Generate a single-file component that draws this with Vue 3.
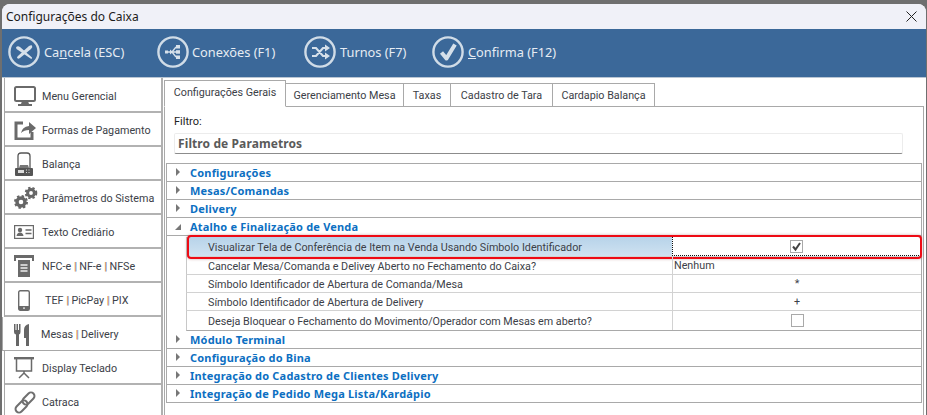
<script setup>
const menu = [
  { key: 'monitor', label: ['Menu Gerencial'] },
  { key: 'share', label: ['Formas de Pagamento'] },
  { key: 'scale', label: ['Balança'] },
  { key: 'gears', label: ['Parâmetros do Sistema'] },
  { key: 'card', label: ['Texto Crediário'] },
  { key: 'printer', label: ['NFC-e ', ' NF-e ', ' NFSe'] },
  { key: 'phone', label: ['TEF ', ' PicPay ', ' PIX'] },
  { key: 'food', label: ['Mesas ', ' Delivery'], active: true },
  { key: 'screen', label: ['Display Teclado'] },
  { key: 'link', label: ['Catraca'] }
]
const tabs = ['Gerenciamento Mesa', 'Taxas', 'Cadastro de Tara', 'Cardapio Balança']
const before = ['Configurações', 'Mesas/Comandas', 'Delivery']
const after = ['Módulo Terminal', 'Configuração do Bina', 'Integração do Cadastro de Clientes Delivery', 'Integração de Pedido Mega Lista/Kardápio']
</script>

<template>
  <div class="screen">
    <div class="window">
      <header class="titlebar">
        <span>Configurações do Caixa</span>
        <svg class="close" width="11" height="11" viewBox="0 0 11 11"><path d="M.5.5l10 10M10.500.5l-10 10" stroke="#222" stroke-width="1" fill="none"/></svg>
      </header>

      <nav class="toolbar">
        <div class="tool tool-cancel">
          <svg width="32" height="32" viewBox="0 0 32 32"><circle cx="16" cy="16" r="14.6" class="ring"/><path d="M8 11.5Q9.5 9.5 12 11L24 21.5Q24.5 23.500 22.500 22.500L10 14Q8 13 8 11.5Z" fill="#d6e0ea"/><path d="M24 9.500Q25 11 23 13L12 22Q9.500 23.500 9 21.500Q9 20.500 11 19L21 10Q23 8.800 24 9.500Z" fill="#d6e0ea"/></svg>
          <span>Ca<u>n</u>cela (ESC)</span>
        </div>
        <div class="tool tool-conn">
          <svg width="32" height="32" viewBox="0 0 32 32"><circle cx="16" cy="16" r="14.6" class="ring"/><rect x="8" y="14.5" width="3" height="3" fill="#d6e0ea"/><path d="M11 16h4M15 16l4-5M15 16l4 5M15 16h4" stroke="#d6e0ea" stroke-width="1.3" fill="none"/><path d="M13 13.5l3 2.5-3 2.500z" fill="#d6e0ea"/><rect x="19" y="9" width="4" height="3.5" fill="#d6e0ea"/><rect x="19" y="14.2" width="4" height="3.5" fill="#d6e0ea"/><rect x="19" y="19.5" width="4" height="3.5" fill="#d6e0ea"/></svg>
          <span>Conexões (F1)</span>
        </div>
        <div class="tool tool-shift">
          <svg width="32" height="32" viewBox="0 0 32 32"><circle cx="16" cy="16" r="14.6" class="ring"/><path d="M8 12h4l7 8h3M8 20h4l7-8h3" stroke="#d6e0ea" stroke-width="2.200" fill="none"/><path d="M21 8.500l5 3.500-5 3.500zM21 16.500l5 3.500-5 3.500z" fill="#d6e0ea"/></svg>
          <span>Turnos (F7)</span>
        </div>
        <div class="tool tool-ok">
          <svg width="32" height="32" viewBox="0 0 32 32"><circle cx="16" cy="16" r="14.6" class="ring"/><path d="M9.500 16.500l5 6 8.500-14" stroke="#d6e0ea" stroke-width="4" fill="none" stroke-linejoin="round"/></svg>
          <span><u>C</u>onfirma (F12)</span>
        </div>
      </nav>

      <div class="body">
        <aside class="sidebar">
          <div v-for="item in menu" :key="item.key" class="side-item" :class="['side-' + item.key, { active: item.active }]">
            <span class="side-icon">
              <svg v-if="item.key === 'monitor'" width="22" height="20" viewBox="0 0 22 20"><rect x="1" y="1" width="20" height="14" rx="1.500" fill="none" stroke="#6a6a6a" stroke-width="2"/><path d="M8 15h6l1 3H7zM4 18h14v2H4z" fill="#6a6a6a"/></svg>
              <svg v-else-if="item.key === 'share'" width="22" height="20" viewBox="0 0 22 20"><path d="M9 3H2v16h16v-7" fill="none" stroke="#6a6a6a" stroke-width="3"/><path d="M7 13q1-6 8-7V2l7 6-7 6v-4q-5 0-8 3z" fill="#6a6a6a"/></svg>
              <svg v-else-if="item.key === 'scale'" width="20" height="25" viewBox="0 0 20 25"><path d="M4 16V4q0-3 3-3h6q3 0 3 3v12" fill="none" stroke="#555" stroke-width="1.300"/><path d="M6 13h8l1 3H5z" fill="#777"/><rect x="1" y="16" width="18" height="8" rx="1" fill="#555"/><rect x="4" y="18" width="6" height="3" fill="#ddd"/><path d="M12 18h1M14.500 18h1M12 20.500h1M14.500 20.500h1" stroke="#ddd"/></svg>
              <svg v-else-if="item.key === 'gears'" width="24" height="24" viewBox="0 0 24 24"><circle cx="7" cy="16" r="4" fill="none" stroke="#666" stroke-width="3.400"/><circle cx="7" cy="16" r="6" fill="none" stroke="#666" stroke-width="2" stroke-dasharray="2.400 2.300"/><circle cx="17" cy="7" r="3.400" fill="none" stroke="#666" stroke-width="3"/><circle cx="17" cy="7" r="5.300" fill="none" stroke="#666" stroke-width="2" stroke-dasharray="2.300 2"/></svg>
              <svg v-else-if="item.key === 'card'" width="20" height="14" viewBox="0 0 20 14"><rect x=".6" y=".6" width="18.800" height="12.800" fill="none" stroke="#6a6a6a" stroke-width="1.200"/><circle cx="6" cy="5" r="2.200" fill="#6a6a6a"/><path d="M2.500 11q.5-3.500 3.500-3.500t3.500 3.500z" fill="#6a6a6a"/><path d="M11.500 5h6M11.500 8.500h6" stroke="#6a6a6a" stroke-width="1.300"/></svg>
              <svg v-else-if="item.key === 'printer'" width="20" height="22" viewBox="0 0 20 22"><path d="M0 0h20v6h-2V3H2v3H0z" fill="#6a6a6a"/><rect x="4" y="5" width="12" height="17" fill="#6a6a6a"/><path d="M6.500 10h7M6.500 13h7M6.500 16h7" stroke="#eee" stroke-width="1.300"/></svg>
              <svg v-else-if="item.key === 'phone'" width="12" height="21" viewBox="0 0 12 21"><rect x=".7" y=".7" width="10.600" height="19.600" rx="1.500" fill="none" stroke="#6a6a6a" stroke-width="1.400"/><rect x="1" y="16" width="10" height="4" fill="#6a6a6a"/><rect x="5" y="17.500" width="2" height="1.200" fill="#eee"/></svg>
              <svg v-else-if="item.key === 'food'" width="16" height="22" viewBox="0 0 16 22"><path d="M0 0h1.500v6h1V0h1.500v6h1V0H6.500v8q0 2-1.500 2.500V22H2V10.500Q0 10 0 8z" fill="#666"/><path d="M15 0v22h-3v-8h-2V6q0-5 5-6z" fill="#666"/></svg>
              <svg v-else-if="item.key === 'screen'" width="20" height="22" viewBox="0 0 20 22"><path d="M0 1.200h20" stroke="#6a6a6a" stroke-width="2.400"/><path d="M2.500 2v12h15V2" fill="none" stroke="#6a6a6a" stroke-width="1.500"/><path d="M10 14v3M10 16l-5 5M10 16l5 5" stroke="#6a6a6a" stroke-width="1.500" fill="none"/></svg>
              <svg v-else width="22" height="23" viewBox="0 0 22 23"><g fill="none" stroke="#6f6f6f" stroke-width="2"><rect x="-7" y="-3.500" width="14" height="7" rx="3.500" transform="translate(7.500 15.500) rotate(-45)"/><rect x="-7" y="-3.500" width="14" height="7" rx="3.500" transform="translate(14.500 7.500) rotate(-45)"/></g></svg>
            </span>
            <span class="side-label">
              <template v-for="(part, i) in item.label" :key="i"><b v-if="i" class="pipe">|</b>{{ part }}</template>
            </span>
          </div>
        </aside>

        <main class="main">
          <div class="tabs">
            <div class="tab tab-active">Configurações Gerais</div>
            <div v-for="t in tabs" :key="t" class="tab">{{ t }}</div>
          </div>
          <section class="page">
            <label class="filter-label">Filtro:</label>
            <div class="filter-input">Filtro de Parametros</div>

            <div class="grid">
              <div v-for="c in before" :key="c" class="cat"><i class="caret"></i><span>{{ c }}</span></div>
              <div class="cat"><i class="caret-open"></i><span>Atalho e Finalização de Venda</span></div>

              <div class="child child-selected">
                <div class="child-label">Visualizar Tela de Conferência de Item na Venda Usando Símbolo Identificador</div>
                <div class="child-value value-focus"><span class="check checked">
                  <svg width="11" height="11" viewBox="0 0 11 11"><path d="M2 5.500l2.500 3 4.500-6.500" fill="none" stroke="#444" stroke-width="2"/></svg>
                </span></div>
                <div class="red-mark"></div>
              </div>
              <div class="child child-18">
                <div class="child-label">Cancelar Mesa/Comanda e Delivey Aberto no Fechamento do Caixa?</div>
                <div class="child-value value-left">Nenhum</div>
              </div>
              <div class="child child-18">
                <div class="child-label">Símbolo Identificador de Abertura de Comanda/Mesa</div>
                <div class="child-value">*</div>
              </div>
              <div class="child child-18">
                <div class="child-label">Símbolo Identificador de Abertura de Delivery</div>
                <div class="child-value">+</div>
              </div>
              <div class="child child-last">
                <div class="child-label">Deseja Bloquear o Fechamento do Movimento/Operador com Mesas em aberto?</div>
                <div class="child-value"><span class="check"></span></div>
              </div>

              <div v-for="c in after" :key="c" class="cat"><i class="caret"></i><span>{{ c }}</span></div>
            </div>
          </section>
        </main>
      </div>
    </div>
  </div>
</template>

<style scoped>
.screen {
  width: 927px;
  height: 415px;
  box-sizing: border-box;
  padding: 4px 1px 0 2px;
  background: #6f6f6f;
  overflow: hidden;
  font-family: "Roboto", "Noto Sans", sans-serif;
  color: #333;
}
.window {
  height: 411px;
  background: #fff;
  border-radius: 8px 8px 0 0;
  overflow: hidden;
  display: flex;
  flex-direction: column;
}
.titlebar {
  flex: none;
  height: 25px;
  background: #f0f1f8;
  display: flex;
  align-items: center;
  justify-content: space-between;
  padding: 0 9px 0 4px;
  font-family: "Noto Sans", sans-serif;
  font-size: 12px;
  color: #1c1c1c;
}
.toolbar {
  flex: none;
  height: 49px;
  box-sizing: border-box;
  background: #3b6899;
  border-bottom: 1px solid #b9c6d4;
  display: flex;
  align-items: center;
  padding: 0 0 2px 6px;
  color: #e6ecf3;
  font-family: "Noto Sans", sans-serif;
  font-size: 12.800px;
}
.tool { display: flex; align-items: center; gap: 4px; white-space: nowrap; }
.tool-cancel { width: 149px; }
.tool-conn { width: 147px; gap: 3px; }
.tool-shift { width: 128px; }
.ring { fill: none; stroke: #d0dce7; stroke-width: 2.400px; }
.body { flex: 1; display: flex; min-height: 0; }
.sidebar {
  flex: none;
  width: 159px;
  margin-left: 2px;
  padding-top: 1px;
  box-sizing: border-box;
  border-left: 1px solid #a8a8a8;
  border-right: 2px solid #b0b0b0;
  display: flex;
  flex-direction: column;
}
.side-item {
  flex: none;
  height: 34px;
  box-sizing: border-box;
  border-bottom: 2px solid #b2b2b2;
  display: flex;
  align-items: center;
  padding: 2px 0 0 9px;
  font-size: 10.750px;
  color: #3c4148;
  background: #fff;
}
.side-item.active {
  margin-left: -3px;
  padding-left: 11px;
  border-bottom: 1px solid #a8a8a8;
  border-left: 1px solid #a8a8a8;
}
.side-icon { width: 28px; flex: none; display: flex; align-items: center; height: 26px; }
.side-phone .side-icon { width: 31px; padding-left: 4px; box-sizing: border-box; }
.side-food .side-icon { width: 27px; }
.side-label { white-space: pre; }
.pipe { font-weight: 400; color: #d9893a; text-shadow: .6px 0 0 #4c86c6; }
.main { flex: none; width: 760px; margin-left: 1px; display: flex; flex-direction: column; min-height: 0; }
.tabs { flex: none; height: 29px; display: flex; align-items: flex-end; box-sizing: border-box; position: relative; z-index: 1; }
.tab {
  height: 24px;
  box-sizing: border-box;
  border: 1px solid #a9a9a9;
  border-left: none;
  padding-top: 1px;
  display: flex;
  align-items: center;
  justify-content: center;
  font-size: 10.750px;
  background: #fff;
  color: #3c4148;
  white-space: nowrap;
}
.tab:nth-child(2) { width: 118px; }
.tab:nth-child(3) { width: 47px; }
.tab:nth-child(4) { width: 102px; }
.tab:nth-child(5) { width: 102px; }
.tab-active {
  height: 27px;
  width: 122px;
  border-left: 1px solid #a9a9a9;
  border-bottom-color: #fff;
  padding: 0 0 2px 0;
}
.page {
  flex: 1;
  margin-top: -1px;
  border: 1px solid #a9a9a9;
  border-bottom: none;
  padding: 6px 1px 0 1px;
  min-height: 0;
  width: 760px;
  box-sizing: border-box;
}
.filter-label { display: block; margin-left: 8px; font-size: 11px; line-height: 18px; color: #222; }
.filter-input {
  box-sizing: border-box;
  margin: 2px 0 0 8px;
  width: 729px;
  height: 21px;
  border: 1px solid #ececec;
  border-bottom: 1px solid #8c8c8c;
  border-radius: 2px;
  padding-left: 3px;
  font-family: "Noto Sans", sans-serif;
  font-size: 12px;
  line-height: 19px;
  font-weight: 700;
  color: #5a5a5a;
  letter-spacing: .1px;
}
.grid { margin-top: 9px; width: 756px; box-sizing: border-box; border: 1px solid #a9a9a9; border-bottom: none; }
.cat {
  height: 18px;
  box-sizing: border-box;
  border-bottom: 1px solid #a9a9a9;
  display: flex;
  align-items: center;
  position: relative;
  padding-left: 23px;
  font-family: "Noto Sans", sans-serif;
  font-size: 11px;
  font-weight: 700;
  color: #0c6fc2;
  letter-spacing: .19px;
  white-space: nowrap;
}
.caret {
  position: absolute;
  left: 9px;
  top: 4px;
  width: 0;
  height: 0;
  border-left: 4px solid #777;
  border-top: 4px solid transparent;
  border-bottom: 4px solid transparent;
}
.caret-open {
  position: absolute;
  left: 8px;
  top: 6px;
  width: 0;
  height: 0;
  border-bottom: 6px solid #777;
  border-left: 6px solid transparent;
}
.child {
  margin-left: 19px;
  border-left: 1px solid #c8c8c8;
  border-bottom: 1px solid #d2d2d2;
  display: grid;
  grid-template-columns: 485px 1fr;
  box-sizing: border-box;
  position: relative;
  font-size: 10.750px;
  color: #3c4148;
}
.child-selected { height: 20px; margin-top: 1px; }
.child-18 { height: 18px; }
.child-last { height: 20px; border-bottom: 1px solid #a9a9a9; }
.child-label { padding: 1px 0 0 21px; display: flex; align-items: center; white-space: nowrap; }
.child-value { border-left: 1px solid #d2d2d2; display: flex; align-items: center; justify-content: center; }
.value-left { justify-content: flex-start; padding-left: 1px; }
.child-selected .child-label { background: linear-gradient(#b7d3e9, #cfe2f1); }
.value-focus { border: 1px dotted #111; margin: -1px 0 0; }
.check {
  width: 13px;
  height: 13px;
  box-sizing: border-box;
  border: 1px solid #a9a9a9;
  background: #fff;
  display: flex;
  align-items: center;
  justify-content: center;
}
.red-mark {
  position: absolute;
  inset: -2px -1px -3px 0;
  border: 2px solid #ee0a14;
  border-radius: 4px;
  box-shadow: 0 0 3px rgba(120, 0, 0, .35);
  pointer-events: none;
}
</style>

<style>
html, body { margin: 0; padding: 0; overflow: hidden; }
</style>
